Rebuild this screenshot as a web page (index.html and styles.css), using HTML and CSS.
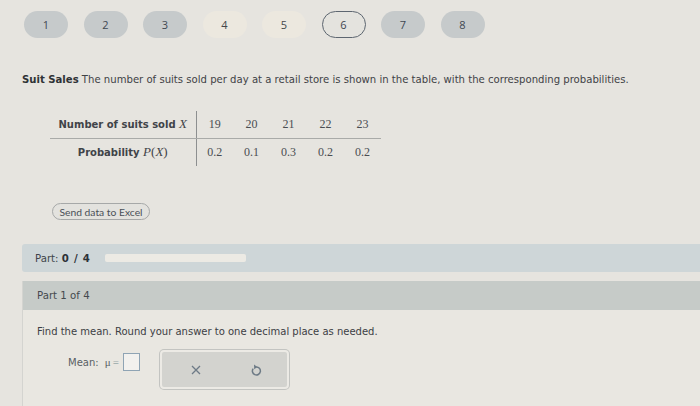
FILE: index.html
```html
<!DOCTYPE html>
<html>
<head>
<meta charset="utf-8">
<link rel="stylesheet" href="styles.css">
</head>
<body>
<nav class="steps">
  <span class="pill done">1</span>
  <span class="pill done">2</span>
  <span class="pill done">3</span>
  <span class="pill todo">4</span>
  <span class="pill todo">5</span>
  <span class="pill current">6</span>
  <span class="pill done">7</span>
  <span class="pill done">8</span>
</nav>

<p class="question"><b>Suit Sales</b> The number of suits sold per day at a retail store is shown in the table, with the corresponding probabilities.</p>

<table class="dist">
  <tr class="row-x">
    <th>Number of suits sold <i class="math">X</i></th>
    <td>19</td><td>20</td><td>21</td><td>22</td><td>23</td>
  </tr>
  <tr class="row-p">
    <th>Probability <i class="math">P</i><span class="math">(</span><i class="math">X</i><span class="math">)</span></th>
    <td>0.2</td><td>0.1</td><td>0.3</td><td>0.2</td><td>0.2</td>
  </tr>
</table>

<button class="excel">Send data to Excel</button>

<div class="part-bar">
  <span>Part: <b>0<span class="slash">/</span>4</b></span>
  <span class="progress"></span>
</div>

<section class="part">
  <header class="part-head">Part 1 of 4</header>
  <div class="part-body">
    <p class="prompt">Find the mean. Round your answer to one decimal place as needed.</p>
    <div class="answer-row">
      <label class="mean">Mean: <span class="mu">μ</span><span class="eq">=</span><span class="input"></span></label>
      <div class="tools">
        <svg width="12" height="12" viewBox="0 0 12 12"><path d="M2 2L10 10M10 2L2 10" stroke="#6d7a86" stroke-width="1.3" fill="none"/></svg>
        <svg width="12" height="14" viewBox="0 0 12 14"><path d="M3.2 5.6A4 4 0 1 0 6.2 4" stroke="#6d7a86" stroke-width="1.5" fill="none"/><path d="M4 1.6L7.3 4L4.2 6.2Z" fill="#6d7a86"/></svg>
      </div>
    </div>
  </div>
</section>
</body>
</html>
```

FILE: styles.css
```css
* { box-sizing: border-box; }
body {
  margin: 0;
  width: 700px;
  height: 406px;
  overflow: hidden;
  background: #e6e4df;
  font-family: "DejaVu Sans", Verdana, sans-serif;
  color: #3b3e42;
}
.steps {
  display: flex;
  gap: 15.5px;
  padding: 11px 0 0 24px;
  height: 38px;
}
.pill {
  width: 44px;
  height: 27px;
  border-radius: 14px;
  display: flex;
  align-items: center;
  justify-content: center;
  font-family: "Open Sans", sans-serif;
  font-size: 11px;
  color: #3f4852;
}
.pill.done { background: #c6cacb; }
.pill.todo { background: #ece8df; color: #44474a; }
.pill.current { background: #e4e3de; border: 1.5px solid #5d6670; color: #3d4650; }
.question {
  margin: 35px 0 0 22px;
  font-size: 10.1px;
  line-height: 14px;
  color: #3f4246;
}
.question b { color: #2f3236; }
.dist {
  margin: 24px 0 0 50px;
  border-collapse: collapse;
}
.dist th {
  width: 146px;
  text-align: center;
  padding: 0;
  font-size: 10px;
  font-weight: bold;
  color: #3f4348;
  border-right: 1px solid #8d8f90;
}
.dist td {
  width: 37px;
  text-align: center;
  font-family: "Liberation Serif", "Times New Roman", serif;
  font-size: 12px;
  color: #4a4d52;
  padding: 0;
}
.row-x { height: 27px; }
.row-x th, .row-x td { border-bottom: 1px solid #a9aaa8; }
.row-p { height: 28px; }
.math {
  font-family: "Liberation Serif", "Times New Roman", serif;
  font-size: 13px;
  font-weight: normal;
}
.excel {
  display: block;
  margin: 37px 0 0 52px;
  width: 98px;
  height: 17px;
  border: 1px solid #a6a8a8;
  border-radius: 9px;
  background: #e3e2de;
  font-family: "Lato", sans-serif;
  font-size: 10.3px;
  color: #4a5058;
  padding: 0;
}
.part-bar {
  margin: 24px 0 0 22px;
  height: 28px;
  background: #ced6d8;
  border-radius: 3px 0 0 3px;
  display: flex;
  align-items: center;
  padding-left: 13px;
  font-size: 10.2px;
  color: #3f454a;
}
.part-bar b { color: #2d3237; }
.slash { margin: 0 5px; }
.progress {
  margin-left: 15px;
  width: 141px;
  height: 8px;
  background: #eceae4;
  border-radius: 2px;
}
.part {
  margin: 9px 0 0 22px;
  border-left: 1px solid #d4d4d0;
}
.part-head {
  height: 29px;
  background: #c6cbc8;
  display: flex;
  align-items: center;
  padding-left: 14px;
  font-size: 10.2px;
  color: #454a4e;
}
.part-body {
  background: #e9e7e1;
  padding: 15px 0 20px 14px;
  height: 110px;
}
.prompt {
  margin: 0;
  font-size: 10px;
  line-height: 14px;
  color: #3c4044;
}
.answer-row {
  display: flex;
  align-items: flex-start;
  margin-top: 11px;
}
.mean {
  display: flex;
  align-items: center;
  margin: 3px 0 0 31px;
  font-size: 10px;
  color: #5a5f64;
}
.mu { margin-left: 6px; font-family: "Liberation Serif", serif; font-size: 11px; }
.eq { margin-left: 2px; color: #9aa; font-size: 8px; }
.input {
  display: inline-block;
  width: 17px;
  height: 18px;
  border: 1px solid #8fa4b4;
  background: #f2f1ee;
  margin-left: 4px;
}
.tools {
  margin-left: 20px;
  width: 129px;
  height: 39px;
  background: #d3d3cf;
  border: 2px solid #eceae5;
  border-radius: 4px;
  box-shadow: 0 0 0 1px #c3c4c1;
  display: flex;
  align-items: center;
  gap: 48px;
  padding: 0 0 0 28px;
}
```
